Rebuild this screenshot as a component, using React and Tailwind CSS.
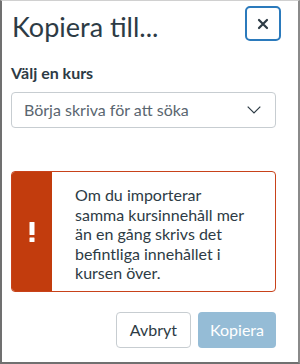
export default function App() {
  return (
    <div className="w-[300px] h-[364px] bg-white border-l-2 border-r-2 border-b-2 border-t border-l-[#707070] border-r-[#8a8a8a] border-b-[#707070] border-t-[#d0d0d0] flex flex-col text-[#2d3b45]" style={{ fontFamily: 'Lato, "Liberation Sans", sans-serif' }}>
      <div className="flex items-start justify-between pl-[10px] pr-[17px] pt-[4px]">
        <h1 className="text-[27px] leading-[40px] mt-[2px]">Kopiera till...</h1>
        <button className="w-[36px] h-[35px] border-2 border-[#2b7abc] rounded-[5px] flex items-center justify-center mt-[1px]">
          <svg width="12" height="12" viewBox="0 0 12 12"><path d="M2 2 L10 10 M10 2 L2 10" stroke="#2d3b45" strokeWidth="2.2" strokeLinecap="round" /></svg>
        </button>
      </div>
      <div className="pl-[9px] pr-[22px] mt-[16px]">
        <div className="text-[16px] font-bold leading-[20px]">Välj en kurs</div>
        <div className="mt-[9px] h-[36px] border border-[#c7cdd1] rounded-[4px] flex items-center justify-between pl-[12px] pr-[14px]">
          <span className="text-[16px] text-[#5a6670]">Börja skriva för att söka</span>
          <svg width="14" height="8" viewBox="0 0 14 8"><path d="M0.7 0.7 L7 7 L13.3 0.7" fill="none" stroke="#2d3b45" strokeWidth="1.2" /></svg>
        </div>
        <div className="mt-[43px] h-[121px] border border-[#c8421a] rounded-[4px] flex overflow-hidden">
          <div className="w-[40px] shrink-0 bg-[#c23c0d] flex items-center justify-center">
            <svg width="6" height="20" viewBox="0 0 6 20"><rect x="0.5" y="0" width="5" height="13" rx="0.5" fill="white" /><rect x="0.5" y="15.5" width="5" height="4.5" rx="0.5" fill="white" /></svg>
          </div>
          <div className="pl-[23px] pt-[13px]">
            <p className="w-[170px] text-[16px] leading-[19.5px]">
              Om du importerar samma kursinnehåll mer än en gång skrivs det befintliga innehållet i kursen över.
            </p>
          </div>
        </div>
        <div className="flex justify-end gap-[7px] mt-[20px]">
          <button className="h-[36px] px-[13px] border border-[#c7cdd1] rounded-[4px] text-[16px] bg-white">Avbryt</button>
          <button className="h-[36px] px-[12px] rounded-[4px] text-[16px] bg-[#95bcd6] text-white">Kopiera</button>
        </div>
      </div>
    </div>
  );
}
